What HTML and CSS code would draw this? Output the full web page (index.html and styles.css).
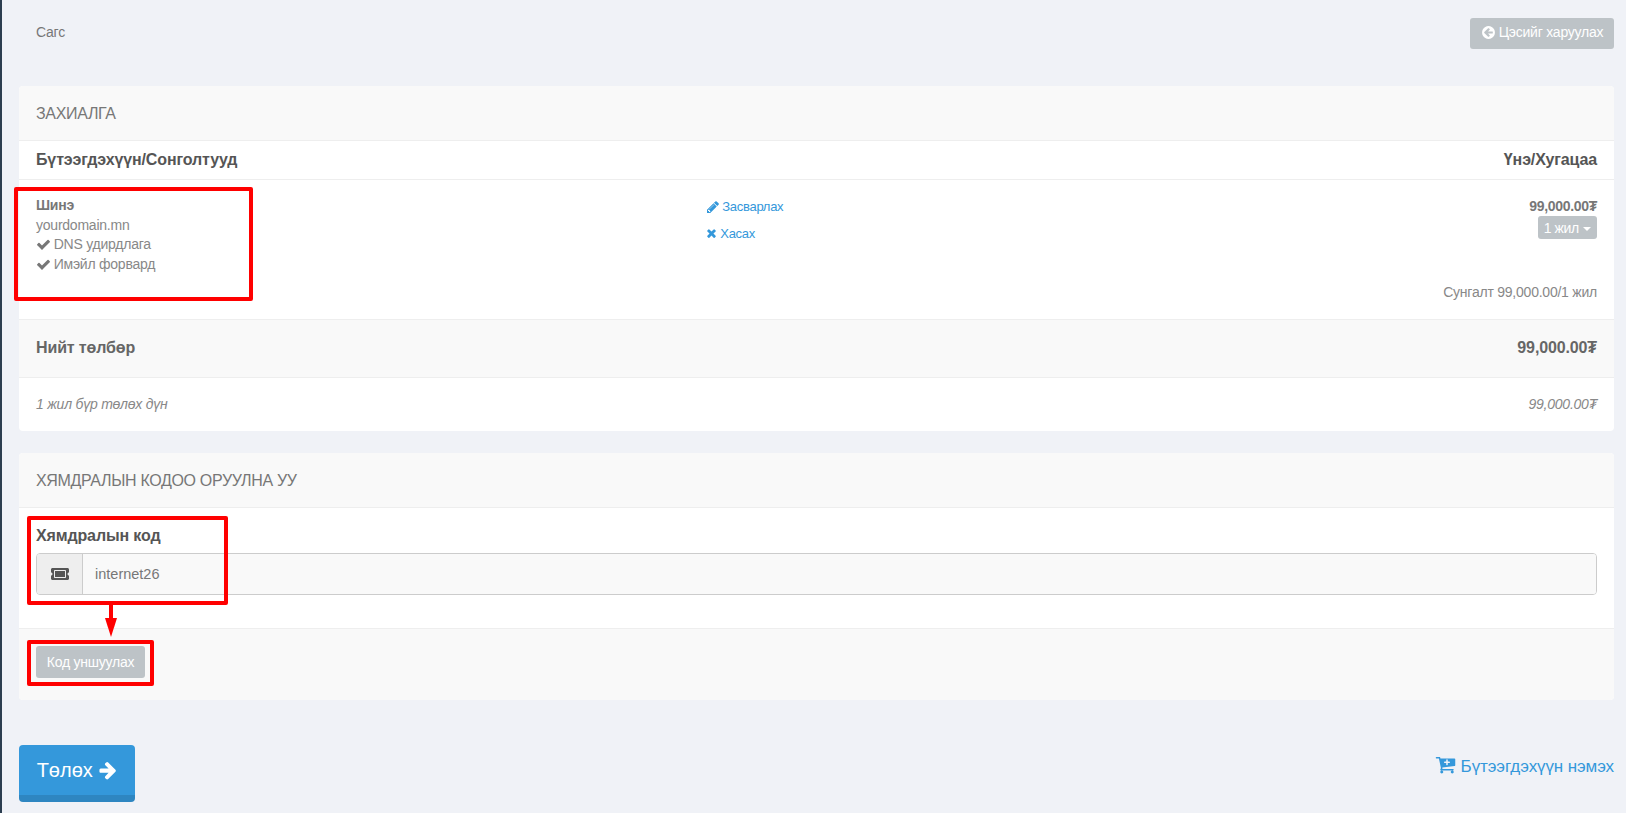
FILE: index.html
```html
<!DOCTYPE html>
<html lang="mn">
<head>
<meta charset="utf-8">
<title>Сагс</title>
<link rel="stylesheet" href="styles.css">
</head>
<body>
<svg class="defs" width="0" height="0" aria-hidden="true">
  <defs>
    <symbol id="i-check" viewBox="0 0 1792 1792"><path d="M1671 566q0 40-28 68l-724 724-136 136q-28 28-68 28t-68-28l-136-136-362-362q-28-28-28-68t28-68l136-136q28-28 68-28t68 28l294 295 656-657q28-28 68-28t68 28l136 136q28 28 28 68z"/></symbol>
  </defs>
</svg>
<div class="page">
  <header class="topbar">
    <h1 class="crumb">Сагс</h1>
    <button class="btn btn-menu"><svg class="ic ic-circle" viewBox="0 0 1792 1792"><path d="M1408 960v-128q0-26-19-45t-45-19h-502l189-189q19-19 19-45t-19-45l-91-91q-18-18-45-18t-45 18l-362 362-91 91q-18 18-18 45t18 45l91 91 362 362q18 18 45 18t45-18l91-91q18-18 18-45t-18-45l-189-189h502q26 0 45-19t19-45zm256-64q0 209-103 385.500t-279.500 279.500-385.500 103-385.500-103-279.500-279.500-103-385.500 103-385.500 279.500-279.500 385.500-103 385.500 103 279.500 279.500 103 385.500z"/></svg>Цэсийг харуулах</button>
  </header>

  <section class="panel panel-order">
    <h2 class="panel-title">ЗАХИАЛГА</h2>
    <div class="row-head">
      <span>Бүтээгдэхүүн/Сонголтууд</span>
      <span>Үнэ/Хугацаа</span>
    </div>
    <div class="row-item">
      <div class="item-info">
        <strong>Шинэ</strong>
        <span>yourdomain.mn</span>
        <span><svg class="ic ic-check"><use href="#i-check"/></svg> DNS удирдлага</span>
        <span><svg class="ic ic-check"><use href="#i-check"/></svg> Имэйл форвард</span>
      </div>
      <div class="item-actions">
        <a class="act"><svg class="ic ic-act" viewBox="0 0 1792 1792"><path d="M491 1536l91-91-235-235-91 91v107h128v128h107zm523-928q0-22-22-22-10 0-17 7l-542 542q-7 7-7 17 0 22 22 22 10 0 17-7l542-542q7-7 7-17zm-54-192l416 416-832 832h-416v-416zm683 96q0 53-37 90l-166 166-416-416 166-165q36-38 90-38 53 0 91 38l235 234q37 39 37 91z"/></svg> Засварлах</a>
        <a class="act"><svg class="ic ic-x" viewBox="0 0 1408 1792"><path d="M1298 1270q0 40-28 68l-136 136q-28 28-68 28t-68-28l-294-294-294 294q-28 28-68 28t-68-28l-136-136q-28-28-28-68t28-68l294-294-294-294q-28-28-28-68t28-68l136-136q28-28 68-28t68 28l294 294 294-294q28-28 68-28t68 28l136 136q28 28 28 68t-28 68l-294 294 294 294q28 28 28 68z"/></svg> Хасах</a>
      </div>
      <div class="item-price">
        <strong>99,000.00₮</strong>
        <button class="btn btn-term">1 жил <i class="caret"></i></button>
        <span class="renew">Сунгалт 99,000.00/1 жил</span>
      </div>
    </div>
    <div class="row-total">
      <span>Нийт төлбөр</span>
      <span>99,000.00₮</span>
    </div>
    <div class="row-note">
      <span>1 жил бүр төлөх дүн</span>
      <span>99,000.00₮</span>
    </div>
  </section>

  <section class="panel panel-promo">
    <h2 class="panel-title">ХЯМДРАЛЫН КОДОО ОРУУЛНА УУ</h2>
    <div class="promo-body">
      <label class="promo-label" for="code">Хямдралын код</label>
      <div class="input-group">
        <span class="addon"><svg class="ic ic-ticket" viewBox="0 0 576 512"><path d="M128 160h320v192H128V160zm400 96c0 26.510 21.490 48 48 48v96c0 26.510-21.490 48-48 48H48c-26.510 0-48-21.490-48-48v-96c26.510 0 48-21.490 48-48s-21.490-48-48-48v-96c0-26.510 21.490-48 48-48h480c26.510 0 48 21.490 48 48v96c-26.510 0-48 21.490-48 48zm-48-104c0-13.255-10.745-24-24-24H120c-13.255 0-24 10.745-24 24v208c0 13.255 10.745 24 24 24h336c13.255 0 24-10.745 24-24V152z"/></svg></span>
        <input id="code" class="code-input" type="text" value="internet26">
      </div>
    </div>
    <div class="promo-foot">
      <button class="btn btn-apply">Код уншуулах</button>
    </div>
  </section>

  <footer class="actions">
    <button class="btn-pay">Төлөх <svg class="ic ic-arrow" viewBox="0 0 1792 1792"><path d="M1600 960q0 54-37 91l-651 651q-39 37-91 37-51 0-90-37l-75-75q-38-38-38-91t38-91l293-293h-704q-52 0-84.500-37.500t-32.500-90.500v-128q0-53 32.500-90.500t84.500-37.500h704l-293-294q-38-36-38-90t38-90l75-75q38-38 90-38 53 0 91 38l651 651q37 35 37 90z"/></svg></button>
    <a class="add-link"><svg class="ic ic-cart" viewBox="0 0 1664 1792"><path d="M1216 704q0-26-19-45t-45-19h-128v-128q0-26-19-45t-45-19-45 19-19 45v128h-128q-26 0-45 19t-19 45 19 45 45 19h128v128q0 26 19 45t45 19 45-19 19-45v-128h128q26 0 45-19t19-45zm-576 832q0 53-37.500 90.500t-90.500 37.500-90.500-37.500-37.500-90.500 37.500-90.500 90.500-37.500 90.500 37.500 37.500 90.500zm896 0q0 53-37.500 90.500t-90.500 37.500-90.500-37.500-37.500-90.500 37.500-90.500 90.500-37.500 90.500 37.500 37.500 90.500zm128-1088v512q0 24-16 42.500t-41 21.500l-1044 122q1 7 4.500 21.500t6 26.500 2.500 22q0 16-24 64h920q26 0 45 19t19 45-19 45-45 19h-1024q-26 0-45-19t-19-45q0-14 11-39.500t29.500-59.500 20.500-38l-177-823h-204q-26 0-45-19t-19-45 19-45 45-19h256q16 0 28.500 6.500t20 15.500 13 24.500 7.500 26.500 5.500 29.500 4.500 25.500h1201q26 0 45 19t19 45z"/></svg> Бүтээгдэхүүн нэмэх</a>
  </footer>

  <div class="mark mark-item"></div>
  <div class="mark mark-code"></div>
  <div class="mark mark-apply"></div>
  <div class="mark-line"></div>
  <div class="mark-head"></div>
</div>
</body>
</html>
```

FILE: styles.css
```css
* { box-sizing: border-box; }
html, body { margin: 0; height: 100%; }
body {
  background: #f0f2f7;
  color: #777;
  font: 14px/1.4 "Liberation Sans", Arial, sans-serif;
  letter-spacing: -0.23px;
  overflow: hidden;
}
.defs { position: absolute; }
.page {
  position: relative;
  height: 813px;
  border-left: 2px solid #2c3e50;
  padding: 0 12px 0 17px;
}
.ic { display: inline-block; fill: currentColor; vertical-align: -2px; }

.topbar {
  height: 86px;
  padding: 18px 0 0 17px;
  display: flex;
  justify-content: space-between;
  align-items: flex-start;
}
.crumb { margin: 4px 0 0; font-size: 14px; font-weight: 400; line-height: 20px; color: #777; }

.btn {
  border: 0;
  border-radius: 3px;
  background: #bdc3c7;
  color: #fff;
  font-family: inherit;
  letter-spacing: -0.23px;
  cursor: pointer;
}
.btn-menu { width: 144px; height: 31px; font-size: 14px; padding: 0 0 3px; }
.ic-circle { width: 15px; height: 15px; margin-right: 3px; vertical-align: -3px; }

.panel { background: #fff; border-radius: 4px; overflow: hidden; }
.panel-title {
  margin: 0;
  height: 55px;
  padding: 0 17px;
  background: #f9f9f9;
  border-bottom: 1px solid #eee;
  font-size: 16px;
  font-weight: 400;
  letter-spacing: -0.33px;
  line-height: 56px;
  color: #777;
}
.panel-order { height: 345px; }
.panel-promo { margin-top: 22px; height: 247px; }

.row-head {
  height: 39px;
  padding: 0 17px;
  display: flex;
  justify-content: space-between;
  align-items: center;
  border-bottom: 1px solid #eee;
  font-size: 16px;
  font-weight: 700;
  letter-spacing: -0.13px;
  color: #555;
}
.row-item {
  height: 140px;
  padding: 16px 17px 0;
  display: grid;
  grid-template-columns: 670px 1fr auto;
  border-bottom: 1px solid #eee;
}
.item-info { display: flex; flex-direction: column; line-height: 19.6px; color: #888; }
.item-info strong { color: #777; }
.ic-check { width: 15px; height: 15px; margin-right: -1px; color: #777; vertical-align: -3px; }
.item-actions { display: flex; flex-direction: column; gap: 10px; padding-top: 2px; font-size: 13px; letter-spacing: -0.3px; line-height: 17px; }
.act { color: #3498db; }
.ic-act { width: 14px; height: 14px; margin-right: -1px; vertical-align: -3px; }
.ic-x { width: 11px; height: 13px; }
.item-price { display: flex; flex-direction: column; align-items: flex-end; padding-top: 1px; color: #888; }
.item-price strong { line-height: 19px; color: #777; font-size: 14px; letter-spacing: -0.3px; }
.btn-term { width: 59px; height: 23px; font-size: 14px; letter-spacing: -0.4px; padding: 0; }
.caret {
  display: inline-block;
  width: 0;
  height: 0;
  margin-left: 1px;
  vertical-align: 2px;
  border-top: 4px solid #fff;
  border-left: 4px solid transparent;
  border-right: 4px solid transparent;
}
.renew { margin-top: 43px; line-height: 20px; }

.row-total {
  height: 58px;
  padding: 0 17px;
  display: flex;
  justify-content: space-between;
  align-items: center;
  background: #f9f9f9;
  border-bottom: 1px solid #eee;
  font-size: 16px;
  font-weight: 700;
  letter-spacing: -0.13px;
  color: #666;
}
.row-note {
  height: 53px;
  padding: 1px 17px 0;
  display: flex;
  justify-content: space-between;
  align-items: center;
  font-style: italic;
  color: #888;
}

.promo-body { height: 121px; padding: 16px 17px 0; border-bottom: 1px solid #eee; }
.promo-label { display: block; height: 29px; font-size: 16px; letter-spacing: -0.13px; font-weight: 700; line-height: 24px; color: #555; }
.input-group { display: flex; height: 42px; border: 1px solid #ccc; border-radius: 4px; overflow: hidden; }
.addon {
  width: 46px;
  display: flex;
  align-items: center;
  justify-content: center;
  background: #eee;
  border-right: 1px solid #ccc;
  color: #555;
}
.ic-ticket { width: 18px; height: 16px; }
.code-input {
  flex: 1;
  border: 0;
  outline: 0;
  padding: 0 12px;
  background: #f9f9f9;
  color: #777;
  font: 14.5px "Liberation Sans", Arial, sans-serif;
}
.promo-foot { height: 71px; padding: 17px; background: #f9f9f9; }
.btn-apply { display: block; width: 109px; height: 32px; font-size: 14px; padding: 0 0 1px; }

.actions { margin-top: 45px; display: flex; justify-content: space-between; align-items: flex-start; }
.btn-pay {
  width: 116px;
  height: 57px;
  padding: 1px 0 0 1px;
  border: 0;
  border-bottom: 7px solid #2e86c1;
  border-radius: 4px;
  background: #3498db;
  color: #fff;
  font: 20px "Liberation Sans", Arial, sans-serif;
}
.ic-arrow { width: 20px; height: 20px; vertical-align: -3px; }
.add-link { margin-top: 9px; font-size: 17px; letter-spacing: -0.1px; line-height: 22px; color: #3498db; }
.ic-cart { width: 21px; height: 21px; vertical-align: -3px; }

.mark { position: absolute; border: 4px solid #f00; border-radius: 2px; pointer-events: none; }
.mark-item { left: 12px; top: 187px; width: 239px; height: 114px; }
.mark-code { left: 25px; top: 516px; width: 201px; height: 89px; }
.mark-apply { left: 25px; top: 640px; width: 127px; height: 46px; }
.mark-line { position: absolute; left: 107px; top: 604px; width: 4px; height: 16px; background: #f00; }
.mark-head {
  position: absolute;
  left: 103px;
  top: 618px;
  width: 0;
  height: 0;
  border-top: 19px solid #f00;
  border-left: 6px solid transparent;
  border-right: 6px solid transparent;
}
```
